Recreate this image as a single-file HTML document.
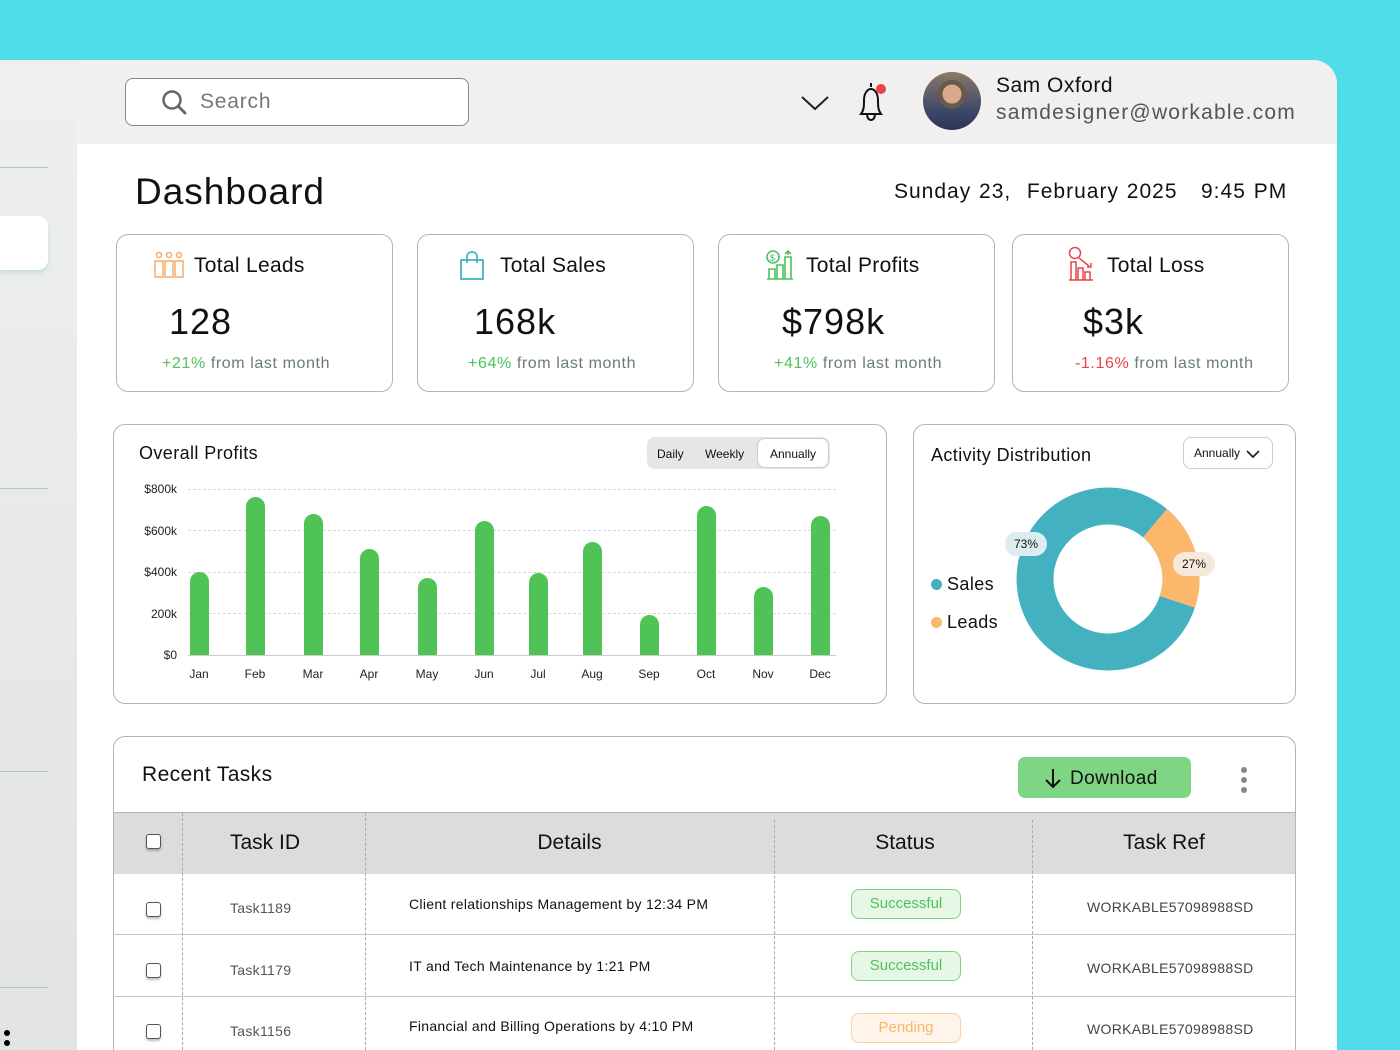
<!DOCTYPE html>
<html><head><meta charset="utf-8"><style>
*{box-sizing:border-box;margin:0;padding:0}
body{width:1400px;height:1050px;overflow:hidden;background:#4fdde9;font-family:"Liberation Sans",sans-serif;position:relative;color:#111}
.abs{position:absolute}
.win{left:0;top:60px;width:1337px;height:990px;background:#fff;border-top-right-radius:24px;overflow:hidden}
.side{left:0;top:0;width:77px;height:990px;background:linear-gradient(#eef0f0,#e2e3e3)}
.sl{left:0;width:48px;height:1px;background:#b8c4c4}
.hdr{left:77px;top:0;width:1260px;height:84px;background:#f0f0f0}
.card{border:1.5px solid #a9b8b8;border-radius:12px;background:#fff}
.kt{font-size:21px;color:#111;letter-spacing:0.3px}
.kv{font-size:36px;color:#111;letter-spacing:1px}
.ks{font-size:16px;color:#6b7b7b;letter-spacing:0.6px}
.g{color:#4fc25a}.r{color:#e8424a}
.bar{position:absolute;width:19px;background:#50c356;border-radius:10px 10px 0 0;bottom:0}
.yl{font-size:12px;color:#222;text-align:right;width:40px}
.ml{font-size:12px;color:#222;width:40px;text-align:center}
.grid{left:188px;width:648px;border-top:1px dashed #d8d8d8;height:0}
.th{font-size:21px;color:#111;text-align:center}
.td{font-size:14px;color:#222;letter-spacing:0.3px}
.cb{width:15px;height:15px;border:1.5px solid #555;border-radius:3px;background:#fff;box-shadow:0 2px 2px rgba(0,0,0,.25)}
.pill{width:110px;height:30px;border-radius:8px;font-size:15px;text-align:center;line-height:28px}
.vd{width:0;border-left:1px dashed #aaa}
.hl{height:1px;background:#c4c8c8}
</style></head><body>
<div class="abs win">
 <div class="abs side">
  <div class="abs sl" style="top:107px"></div>
  <div class="abs" style="left:0;top:156px;width:48px;height:54px;background:#fff;border-radius:0 10px 10px 0;box-shadow:0 3px 4px rgba(120,190,140,.3)"></div>
  <div class="abs sl" style="top:428px"></div>
  <div class="abs sl" style="top:711px"></div>
  <div class="abs sl" style="top:927px"></div>
  <div class="abs" style="left:4px;top:970px;width:6px;height:6px;border-radius:3px;background:#000"></div>
  <div class="abs" style="left:4px;top:980px;width:6px;height:6px;border-radius:3px;background:#000"></div>
 </div>
 <div class="abs hdr">
  <div class="abs" style="left:48px;top:18px;width:344px;height:48px;border:1.5px solid #888;border-radius:8px;background:#fff"></div>
  <svg class="abs" style="left:84px;top:29px" width="28" height="28" viewBox="0 0 28 28"><circle cx="11" cy="11" r="8.5" fill="none" stroke="#666" stroke-width="2.5"/><path d="M17 17l7 7" stroke="#666" stroke-width="2.8" stroke-linecap="round"/></svg>
  <div class="abs" style="left:123px;top:30px;font-size:21px;color:#777;letter-spacing:0.8px">Search</div>
  <svg class="abs" style="left:723px;top:34px" width="30" height="18"><path d="M2 3l13 12 13-12" fill="none" stroke="#222" stroke-width="2"/></svg>
  <svg class="abs" style="left:774px;top:18px" width="40" height="48" viewBox="0 0 40 48"><path d="M20 5v4M10 36c3-4 3-8 3-14 0-6 3-11 7-11s7 5 7 11c0 6 0 10 3 14zM16 36c0 4 2 6 4 6s4-2 4-6" fill="none" stroke="#111" stroke-width="2"/><circle cx="30" cy="11" r="5" fill="#ea4545"/></svg>
  <div class="abs" style="left:846px;top:12px;width:58px;height:58px;border-radius:50%;background:radial-gradient(circle at 50% 38%,#d9a98f 0 20%,#6b5a4c 21% 30%,transparent 31%),linear-gradient(#8b7a66,#3b4668 70%,#2c3555);"></div>
  <div class="abs" style="left:919px;top:14px;font-size:21px;color:#111;letter-spacing:0.5px">Sam Oxford</div>
  <div class="abs" style="left:919px;top:41px;font-size:21px;color:#555;letter-spacing:1.2px">samdesigner@workable.com</div>
 </div>
 <div class="abs" style="left:135px;top:111px;font-size:37px;color:#111;letter-spacing:1px">Dashboard</div>
 <div class="abs" style="left:894px;top:120px;font-size:21px;color:#111;letter-spacing:1px;word-spacing:1px">Sunday 23,&nbsp; February 2025 &nbsp;&nbsp;9:45 PM</div>

 <div class="abs card" style="left:116px;top:174px;width:277px;height:158px">
  <svg class="abs" style="left:36px;top:16px" width="32" height="28" viewBox="0 0 32 28" fill="none" stroke="#f5a963" stroke-width="1.4"><circle cx="6" cy="4" r="2.5"/><circle cx="16" cy="4" r="2.5"/><circle cx="26" cy="4" r="2.5"/><path d="M2 10h8v16H2zM12 10h8v16h-8zM22 10h8v16h-8z"/></svg>
  <div class="abs kt" style="left:77px;top:19px">Total Leads</div>
  <div class="abs kv" style="left:52px;top:66px">128</div>
  <div class="abs ks" style="left:45px;top:120px"><span class="g">+21%</span> from last month</div>
 </div>
 <div class="abs card" style="left:417px;top:174px;width:277px;height:158px">
  <svg class="abs" style="left:40px;top:16px" width="28" height="30" viewBox="0 0 28 30" fill="none" stroke="#3fb3c6" stroke-width="1.8"><path d="M3 9h22v19H3zM9 12V6c0-3 2-5 5-5s5 2 5 5v6"/></svg>
  <div class="abs kt" style="left:82px;top:19px">Total Sales</div>
  <div class="abs kv" style="left:56px;top:66px">168k</div>
  <div class="abs ks" style="left:50px;top:120px"><span class="g">+64%</span> from last month</div>
 </div>
 <div class="abs card" style="left:718px;top:174px;width:277px;height:158px">
  <svg class="abs" style="left:46px;top:14px" width="30" height="32" viewBox="0 0 30 32" fill="none" stroke="#4fc25a" stroke-width="1.6"><circle cx="8" cy="8" r="6"/><text x="5" y="12" font-size="9" fill="#4fc25a" stroke="none">$</text><path d="M2 30h26M4 30v-10h6v10M12 30V16h6v14M20 30V8h6v22M23 2v4M20 5l3-3 3 3"/></svg>
  <div class="abs kt" style="left:87px;top:19px">Total Profits</div>
  <div class="abs kv" style="left:63px;top:66px">$798k</div>
  <div class="abs ks" style="left:55px;top:120px"><span class="g">+41%</span> from last month</div>
 </div>
 <div class="abs card" style="left:1012px;top:174px;width:277px;height:158px">
  <svg class="abs" style="left:54px;top:11px" width="30" height="36" viewBox="0 0 30 36" fill="none" stroke="#e8424a" stroke-width="1.5"><circle cx="8" cy="7" r="5.5"/><path d="M2 34h24M4 34V16h5v18M11 34V22h5v12M18 34v-8h5v8M12 12l10 8M20 21h4v-4"/></svg>
  <div class="abs kt" style="left:94px;top:19px">Total Loss</div>
  <div class="abs kv" style="left:70px;top:66px">$3k</div>
  <div class="abs ks" style="left:62px;top:120px"><span class="r">-1.16%</span> from last month</div>
 </div>

 <div class="abs card" style="left:113px;top:364px;width:774px;height:280px"></div>
 <div class="abs" style="left:139px;top:383px;font-size:18px;letter-spacing:0.4px">Overall Profits</div>
 <div class="abs" style="left:647px;top:377px;width:183px;height:32px;background:#e6e6e6;border-radius:8px"></div>
 <div class="abs" style="left:757px;top:378px;width:72px;height:30px;background:#fff;border:1px solid #ccc;border-radius:8px"></div>
 <div class="abs" style="left:657px;top:387px;font-size:12px">Daily</div>
 <div class="abs" style="left:705px;top:387px;font-size:12px">Weekly</div>
 <div class="abs" style="left:770px;top:387px;font-size:12px">Annually</div>
 <div class="abs grid" style="top:429px"></div>
 <div class="abs grid" style="top:470px"></div>
 <div class="abs grid" style="top:512px"></div>
 <div class="abs grid" style="top:553px"></div>
 <div class="abs grid" style="top:595px;border-top:1px solid #ccc"></div>
 <div class="abs yl" style="left:137px;top:422px">$800k</div>
 <div class="abs yl" style="left:137px;top:464px">$600k</div>
 <div class="abs yl" style="left:137px;top:505px">$400k</div>
 <div class="abs yl" style="left:137px;top:547px">200k</div>
 <div class="abs yl" style="left:137px;top:588px">$0</div>
 <div class="abs" style="left:0;top:0;width:900px;height:595px">
  <div class="bar" style="left:190px;height:83px"></div>
  <div class="bar" style="left:246px;height:158px"></div>
  <div class="bar" style="left:304px;height:141px"></div>
  <div class="bar" style="left:360px;height:106px"></div>
  <div class="bar" style="left:418px;height:77px"></div>
  <div class="bar" style="left:475px;height:134px"></div>
  <div class="bar" style="left:529px;height:82px"></div>
  <div class="bar" style="left:583px;height:113px"></div>
  <div class="bar" style="left:640px;height:40px"></div>
  <div class="bar" style="left:697px;height:149px"></div>
  <div class="bar" style="left:754px;height:68px"></div>
  <div class="bar" style="left:811px;height:139px"></div>
 </div>
 <div class="abs ml" style="left:179px;top:607px">Jan</div>
 <div class="abs ml" style="left:235px;top:607px">Feb</div>
 <div class="abs ml" style="left:293px;top:607px">Mar</div>
 <div class="abs ml" style="left:349px;top:607px">Apr</div>
 <div class="abs ml" style="left:407px;top:607px">May</div>
 <div class="abs ml" style="left:464px;top:607px">Jun</div>
 <div class="abs ml" style="left:518px;top:607px">Jul</div>
 <div class="abs ml" style="left:572px;top:607px">Aug</div>
 <div class="abs ml" style="left:629px;top:607px">Sep</div>
 <div class="abs ml" style="left:686px;top:607px">Oct</div>
 <div class="abs ml" style="left:743px;top:607px">Nov</div>
 <div class="abs ml" style="left:800px;top:607px">Dec</div>

 <div class="abs card" style="left:913px;top:364px;width:383px;height:280px"></div>
 <div class="abs" style="left:931px;top:385px;font-size:18px;letter-spacing:0.4px">Activity Distribution</div>
 <div class="abs" style="left:1183px;top:377px;width:90px;height:32px;border:1.5px solid #ccc;border-radius:8px;font-size:12px;padding:8px 0 0 10px">Annually</div>
 <svg class="abs" style="left:1246px;top:389px" width="14" height="10"><path d="M1 2l6 6 6-6" fill="none" stroke="#222" stroke-width="1.8"/></svg>
 <svg class="abs" style="left:1008px;top:420px" width="200" height="200" viewBox="0 0 200 200">
  <circle cx="100" cy="99" r="73" fill="none" stroke="#44b1c1" stroke-width="37"/>
  <circle cx="100" cy="99" r="73" fill="none" stroke="#fbb76b" stroke-width="37" stroke-dasharray="87 400" transform="rotate(-50 100 99)"/>
 </svg>
 <div class="abs" style="left:1005px;top:472px;width:42px;height:24px;border-radius:12px;background:#dcedef;font-size:12px;text-align:center;line-height:24px">73%</div>
 <div class="abs" style="left:1173px;top:492px;width:42px;height:24px;border-radius:12px;background:#f7e9da;font-size:12px;text-align:center;line-height:24px">27%</div>
 <div class="abs" style="left:931px;top:519px;width:11px;height:11px;border-radius:50%;background:#44b1c1"></div>
 <div class="abs" style="left:947px;top:514px;font-size:18px;letter-spacing:0.4px">Sales</div>
 <div class="abs" style="left:931px;top:557px;width:11px;height:11px;border-radius:50%;background:#fbb76b"></div>
 <div class="abs" style="left:947px;top:552px;font-size:18px;letter-spacing:0.4px">Leads</div>

 <div class="abs" style="left:113px;top:676px;width:1183px;height:314px;border:1.5px solid #a9b8b8;border-bottom:none;border-radius:12px 12px 0 0"></div>
 <div class="abs" style="left:142px;top:703px;font-size:21px;letter-spacing:0.4px">Recent Tasks</div>
 <div class="abs" style="left:1018px;top:697px;width:173px;height:41px;background:#7ed685;border-radius:7px"></div>
 <svg class="abs" style="left:1044px;top:708px" width="18" height="22"><path d="M9 1v18M2 12l7 7 7-7" fill="none" stroke="#111" stroke-width="2"/></svg>
 <div class="abs" style="left:1070px;top:708px;font-size:19px;letter-spacing:0.4px">Download</div>
 <div class="abs" style="left:1241px;top:707px;width:6px;height:6px;border-radius:3px;background:#888"></div>
 <div class="abs" style="left:1241px;top:717px;width:6px;height:6px;border-radius:3px;background:#888"></div>
 <div class="abs" style="left:1241px;top:727px;width:6px;height:6px;border-radius:3px;background:#888"></div>
 <div class="abs hl" style="left:114px;top:752px;width:1181px;background:#a9b8b8"></div>
 <div class="abs" style="left:114px;top:753px;width:1181px;height:61px;background:#dcdcdc"></div>
 <div class="abs hl" style="left:114px;top:874px;width:1181px"></div>
 <div class="abs hl" style="left:114px;top:936px;width:1181px"></div>
 <div class="abs vd" style="left:182px;top:753px;height:237px"></div>
 <div class="abs vd" style="left:365px;top:753px;height:237px"></div>
 <div class="abs vd" style="left:774px;top:760px;height:230px"></div>
 <div class="abs vd" style="left:1032px;top:760px;height:230px"></div>
 <div class="abs cb" style="left:146px;top:774px"></div>
 <div class="abs th" style="left:182px;top:771px;width:166px">Task ID</div>
 <div class="abs th" style="left:365px;top:771px;width:409px">Details</div>
 <div class="abs th" style="left:774px;top:771px;width:262px">Status</div>
 <div class="abs th" style="left:1032px;top:771px;width:264px">Task Ref</div>

 <div class="abs cb" style="left:146px;top:842px"></div>
 <div class="abs td" style="left:230px;top:840px;color:#555">Task1189</div>
 <div class="abs td" style="left:409px;top:836px;color:#111">Client relationships Management by 12:34 PM</div>
 <div class="abs pill" style="left:851px;top:829px;border:1.5px solid #7fd484;background:#e6f7e6;color:#4fc25a">Successful</div>
 <div class="abs td" style="left:1087px;top:839px;color:#444">WORKABLE57098988SD</div>

 <div class="abs cb" style="left:146px;top:903px"></div>
 <div class="abs td" style="left:230px;top:902px;color:#555">Task1179</div>
 <div class="abs td" style="left:409px;top:898px;color:#111">IT and Tech Maintenance by 1:21 PM</div>
 <div class="abs pill" style="left:851px;top:891px;border:1.5px solid #7fd484;background:#e6f7e6;color:#4fc25a">Successful</div>
 <div class="abs td" style="left:1087px;top:900px;color:#444">WORKABLE57098988SD</div>

 <div class="abs cb" style="left:146px;top:964px"></div>
 <div class="abs td" style="left:230px;top:963px;color:#555">Task1156</div>
 <div class="abs td" style="left:409px;top:958px;color:#111">Financial and Billing Operations by 4:10 PM</div>
 <div class="abs pill" style="left:851px;top:953px;border:1.5px solid #fbcf9f;background:#fff4ea;color:#f8b56c">Pending</div>
 <div class="abs td" style="left:1087px;top:961px;color:#444">WORKABLE57098988SD</div>
</div>
</body></html>
